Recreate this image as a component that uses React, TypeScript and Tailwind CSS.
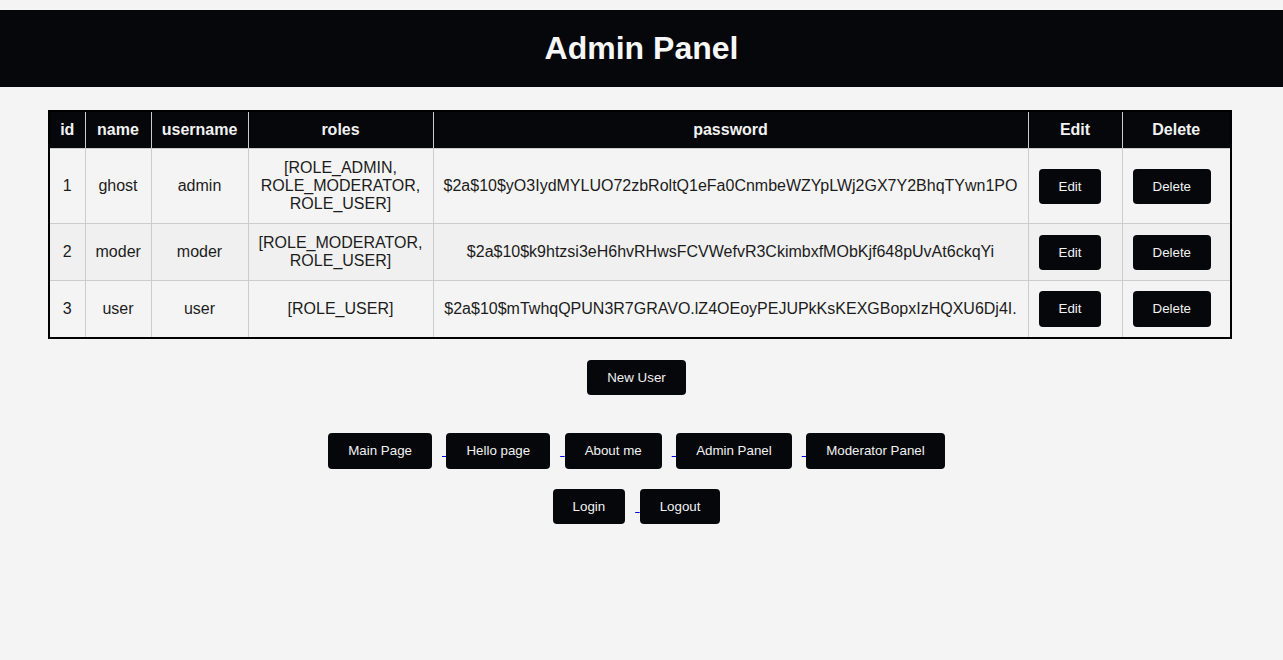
const users = [
  {
    id: 1,
    name: "ghost",
    username: "admin",
    roles: "[ROLE_ADMIN, ROLE_MODERATOR, ROLE_USER]",
    password: "$2a$10$yO3IydMYLUO72zbRoltQ1eFa0CnmbeWZYpLWj2GX7Y2BhqTYwn1PO",
  },
  {
    id: 2,
    name: "moder",
    username: "moder",
    roles: "[ROLE_MODERATOR, ROLE_USER]",
    password: "$2a$10$k9htzsi3eH6hvRHwsFCVWefvR3CkimbxfMObKjf648pUvAt6ckqYi",
  },
  {
    id: 3,
    name: "user",
    username: "user",
    roles: "[ROLE_USER]",
    password: "$2a$10$mTwhqQPUN3R7GRAVO.lZ4OEoyPEJUPkKsKEXGBopxIzHQXU6Dj4I.",
  },
];

const btn =
  "mr-[10px] inline-block rounded-[4px] bg-[#05070b] px-5 py-[10px] align-baseline text-[13.333px] leading-[15.4px] text-[#f2f2f2]";

const th = "border border-[#cccccc] px-[10px] py-[9px] text-center font-bold";
const td = "border border-[#cccccc] p-[10px] text-center leading-[18px]";

function NavLink({ label, first }: { label: string; first?: boolean }) {
  return (
    <a href="#" className="text-[#0000ee] underline">
      {first ? null : " "}
      <button className={btn}>{label}</button>
    </a>
  );
}

export default function App() {
  return (
    <div className="min-h-[660px] bg-[#f4f4f4] pt-[10px] font-['Liberation_Sans',Arial,sans-serif] text-[16px] leading-[18.4px] text-[#1c1c1c]">
      <header className="bg-[#05070b] py-5 text-center">
        <h1 className="text-[32px] font-bold leading-[37px] text-[#f7f7f7]">Admin Panel</h1>
      </header>

      <table className="ml-[48px] mt-[23px] w-[1182px] table-fixed border-collapse border-2 border-black">
        <colgroup>
          <col className="w-[36px]" />
          <col className="w-[66px]" />
          <col className="w-[97px]" />
          <col className="w-[185px]" />
          <col className="w-[595px]" />
          <col className="w-[94px]" />
          <col className="w-[109px]" />
        </colgroup>
        <thead>
          <tr className="bg-[#05070b] text-[#f2f2f2]">
            <th className={th}>id</th>
            <th className={th}>name</th>
            <th className={th}>username</th>
            <th className={th}>roles</th>
            <th className={th}>password</th>
            <th className={th}>Edit</th>
            <th className={th}>Delete</th>
          </tr>
        </thead>
        <tbody>
          {users.map((u, i) => (
            <tr key={u.id} className={i % 2 === 1 ? "bg-[#f0f0f0]" : "bg-[#f4f4f4]"}>
              <td className={td}>{u.id}</td>
              <td className={td}>{u.name}</td>
              <td className={td}>{u.username}</td>
              <td className={td}>{u.roles}</td>
              <td className={td + " whitespace-nowrap"}>{u.password}</td>
              <td className={td + " text-left"}>
                <button className={btn}>Edit</button>
              </td>
              <td className={td + " text-left"}>
                <button className={btn}>Delete</button>
              </td>
            </tr>
          ))}
        </tbody>
      </table>

      <div className="mt-[21px] text-center">
        <button className={btn}>New User</button>
      </div>

      <div className="mt-[38px] text-center">
        <NavLink label="Main Page" first />
        <NavLink label="Hello page" />
        <NavLink label="About me" />
        <NavLink label="Admin Panel" />
        <NavLink label="Moderator Panel" />
      </div>

      <div className="mt-[20px] text-center">
        <NavLink label="Login" first />
        <NavLink label="Logout" />
      </div>
    </div>
  );
}
